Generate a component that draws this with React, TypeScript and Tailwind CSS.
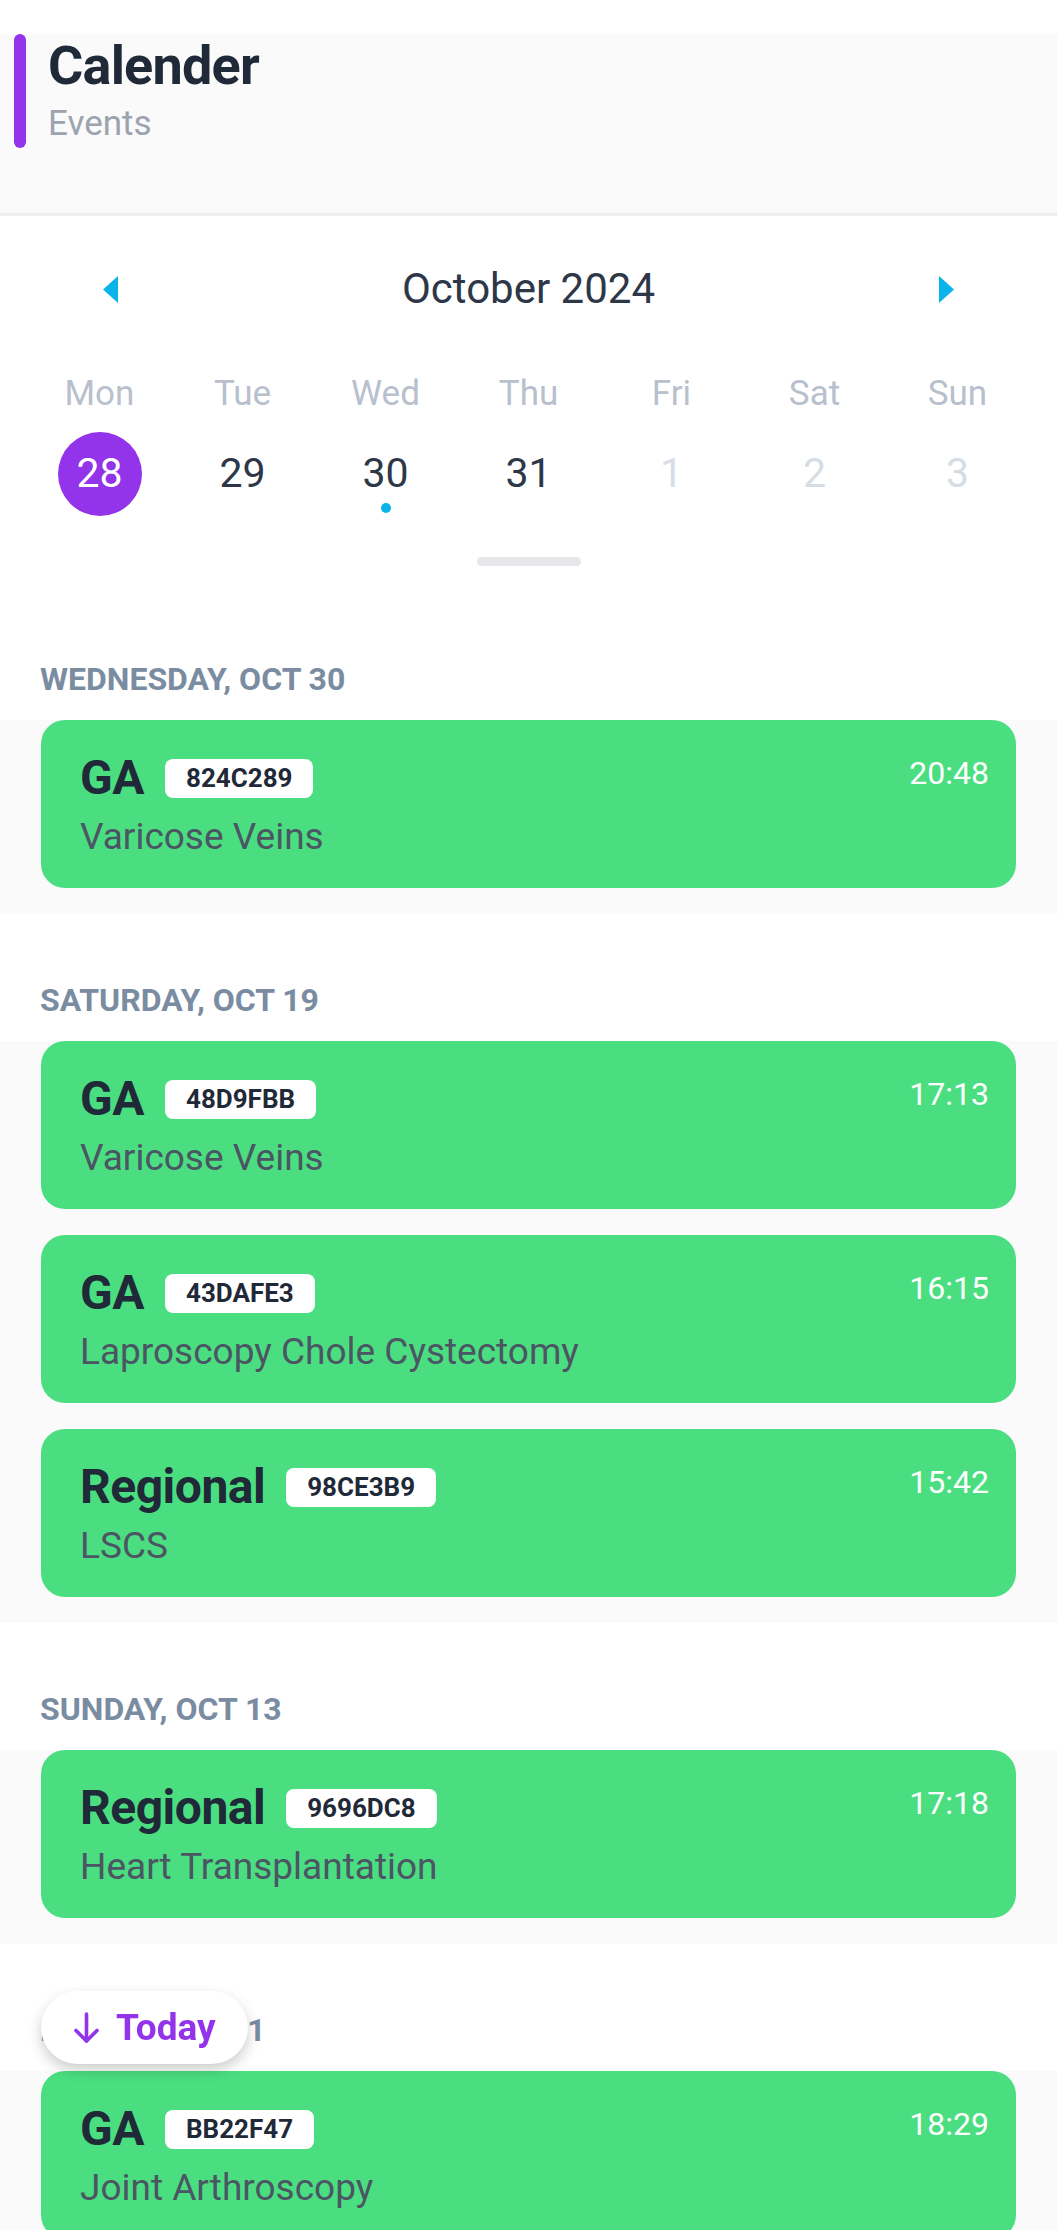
import React from 'react';

type Event = {
  kind: string;
  code: string;
  time: string;
  title: string;
};

type Group = {
  label: string;
  events: Event[];
};

const groups: Group[] = [
  {
    label: 'WEDNESDAY, OCT 30',
    events: [{ kind: 'GA', code: '824C289', time: '20:48', title: 'Varicose Veins' }],
  },
  {
    label: 'SATURDAY, OCT 19',
    events: [
      { kind: 'GA', code: '48D9FBB', time: '17:13', title: 'Varicose Veins' },
      { kind: 'GA', code: '43DAFE3', time: '16:15', title: 'Laproscopy Chole Cystectomy' },
      { kind: 'Regional', code: '98CE3B9', time: '15:42', title: 'LSCS' },
    ],
  },
  {
    label: 'SUNDAY, OCT 13',
    events: [{ kind: 'Regional', code: '9696DC8', time: '17:18', title: 'Heart Transplantation' }],
  },
  {
    label: 'FRIDAY, OCT 11',
    events: [{ kind: 'GA', code: 'BB22F47', time: '18:29', title: 'Joint Arthroscopy' }],
  },
];

const week = [
  { name: 'Mon', day: '28', selected: true },
  { name: 'Tue', day: '29' },
  { name: 'Wed', day: '30', dot: true },
  { name: 'Thu', day: '31' },
  { name: 'Fri', day: '1', muted: true },
  { name: 'Sat', day: '2', muted: true },
  { name: 'Sun', day: '3', muted: true },
];

const Arrow = ({ dir }: { dir: 'left' | 'right' }) => (
  <svg width="15" height="27" viewBox="0 0 15 27">
    {dir === 'left' ? (
      <polygon points="15,0 15,27 0,13.5" fill="#0bb4e8" />
    ) : (
      <polygon points="0,0 0,27 15,13.5" fill="#0bb4e8" />
    )}
  </svg>
);

const EventCard = ({ ev }: { ev: Event }) => (
  <div className="h-[168px] rounded-[24px] bg-[#4ade80] pl-[39px] pr-[27px] pt-[35px]">
    <div className="flex items-start justify-between">
      <div className="flex h-[46px] items-center gap-[21px]">
        <span className="text-[48px] font-bold leading-[46px] tracking-[-0.5px] text-[#1f2937]">{ev.kind}</span>
        <span className="flex h-[39px] items-center rounded-[8px] bg-white px-[21px] text-[26px] font-bold text-[#1f2937]">
          {ev.code}
        </span>
      </div>
      <span className="mt-[2px] text-[32px] leading-[32px] text-white">{ev.time}</span>
    </div>
    <div className="mt-[15px] text-[37px] leading-[42px] text-[#4b5563]">{ev.title}</div>
  </div>
);

export default function App() {
  return (
    <div className="relative min-h-screen bg-white font-['Roboto','Noto_Sans',sans-serif]">
      <div className="h-[34px]" />

      {/* Header */}
      <div className="flex border-b-[3px] border-[#eeeeee] bg-[#fafafa] pb-[65px]">
        <div className="ml-[14px] h-[114px] w-[12px] rounded-full bg-[#9333ea]" />
        <div className="ml-[22px] pt-[2px]">
          <div className="text-[54px] font-bold leading-[60px] tracking-[-0.8px] text-[#1f2937]">Calender</div>
          <div className="mt-[8px] text-[35px] leading-[40px] text-[#9ca3af]">Events</div>
        </div>
      </div>

      {/* Calendar */}
      <div className="bg-white pb-[27px] pt-[49px]">
        <div className="flex h-[48px] items-center justify-between px-[103px]">
          <Arrow dir="left" />
          <span className="text-[42px] leading-[48px] text-[#2d3748]">October 2024</span>
          <Arrow dir="right" />
        </div>
        <div className="mt-[61px] grid grid-cols-7 px-[28px]">
          {week.map((d) => (
            <div key={d.name} className="text-center text-[35px] leading-[40px] text-[#b8c0cd]">
              {d.name}
            </div>
          ))}
        </div>
        <div className="mt-[18px] grid grid-cols-7 px-[28px]">
          {week.map((d) => (
            <div key={d.name} className="relative flex h-[84px] items-center justify-center">
              {d.selected ? (
                <span className="flex h-[84px] w-[84px] items-center justify-center rounded-full bg-[#9333ea] text-[41px] text-white">
                  {d.day}
                </span>
              ) : (
                <span className={d.muted ? 'text-[41px] text-[#d6dde5]' : 'text-[41px] text-[#2d3748]'}>{d.day}</span>
              )}
              {d.dot && <span className="absolute bottom-[3px] h-[10px] w-[10px] rounded-full bg-[#0bb4e8]" />}
            </div>
          ))}
        </div>
        <div className="mx-auto mt-[41px] h-[9px] w-[104px] rounded-full bg-[#e5e7eb]" />
      </div>

      {/* Agenda */}
      {groups.map((g) => (
        <div key={g.label}>
          <div className="pb-[23px] pl-[40px] pt-[68px] text-[32px] font-bold leading-[36px] text-[#7a8ca1]">{g.label}</div>
          <div className="flex flex-col gap-[26px] bg-[#fafafa] px-[41px] pb-[26px]">
            {g.events.map((ev) => (
              <EventCard key={ev.code} ev={ev} />
            ))}
          </div>
        </div>
      ))}

      {/* Today button */}
      <div className="fixed bottom-[166px] left-[41px] flex h-[73px] w-[207px] items-center gap-[16px] rounded-full bg-white pl-[32px] shadow-[0_6px_14px_rgba(0,0,0,0.2)]">
        <svg width="27" height="31" viewBox="0 0 27 31" fill="none" stroke="#9333ea" strokeWidth="3.6" strokeLinecap="round" strokeLinejoin="round">
          <path d="M13.5 2v27" />
          <path d="M3 18.5l10.5 10.5L24 18.5" />
        </svg>
        <span className="text-[37px] font-bold leading-[44px] text-[#9333ea]">Today</span>
      </div>
    </div>
  );
}
